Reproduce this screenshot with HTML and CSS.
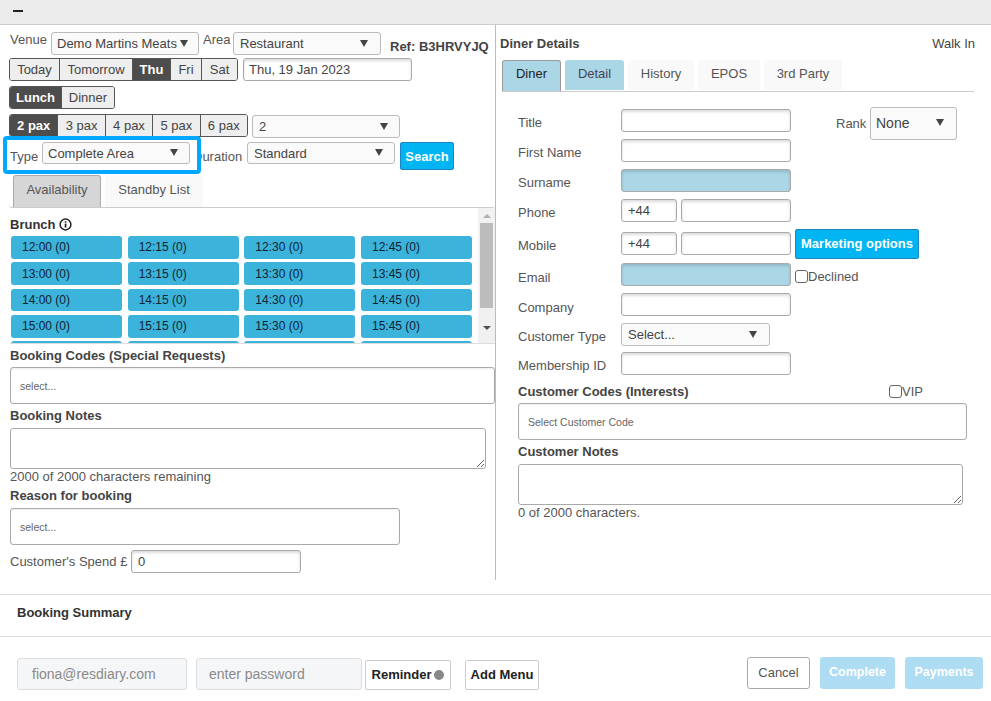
FILE: index.html
```html
<!DOCTYPE html>
<html lang="en">
<head>
<meta charset="utf-8">
<title>Booking</title>
<link rel="stylesheet" href="styles.css">
</head>
<body>
<header class="topbar"><span class="minus"></span></header>
<main class="columns">
  <section class="left">
    <div class="row r-venue">
      <span class="lbl venue-lbl">Venue</span>
      <div class="select s-venue"><span>Demo Martins Meats</span><i class="caret"></i></div>
      <span class="lbl area-lbl">Area</span>
      <div class="select s-area"><span>Restaurant</span><i class="caret"></i></div>
      <span class="ref">Ref: B3HRVYJQ</span>
    </div>
    <div class="row r-date">
      <div class="group">
        <button class="gbtn w-today">Today</button><button class="gbtn w-tom">Tomorrow</button><button class="gbtn on w-thu">Thu</button><button class="gbtn w-fri">Fri</button><button class="gbtn w-sat">Sat</button>
      </div>
      <input class="field date" value="Thu, 19 Jan 2023">
    </div>
    <div class="row r-meal">
      <div class="group">
        <button class="gbtn on w-lunch">Lunch</button><button class="gbtn w-dinner">Dinner</button>
      </div>
    </div>
    <div class="row r-pax">
      <div class="group">
        <button class="gbtn on w-pax">2 pax</button><button class="gbtn w-pax">3 pax</button><button class="gbtn w-pax">4 pax</button><button class="gbtn w-pax">5 pax</button><button class="gbtn w-pax">6 pax</button>
      </div>
      <div class="select s-pax"><span>2</span><i class="caret"></i></div>
    </div>
    <div class="row r-type">
      <span class="lbl type-lbl">Type</span>
      <div class="select s-type"><span>Complete Area</span><i class="caret"></i></div>
      <span class="lbl dur-lbl">Duration</span>
      <div class="select s-dur"><span>Standard</span><i class="caret"></i></div>
      <button class="search">Search</button>
      <div class="highlight"></div>
    </div>
    <div class="tabs left-tabs">
      <span class="tab tab-active w-avail">Availability</span>
      <span class="tab w-standby">Standby List</span>
    </div>
    <div class="avail">
      <div class="slots-wrap">
        <h3 class="brunch">Brunch
          <svg class="info" width="13" height="13" viewBox="0 0 13 13"><circle cx="6.5" cy="6.5" r="5.4" fill="none" stroke="#222" stroke-width="1.5"/><rect x="5.7" y="5.6" width="1.7" height="4" fill="#222"/><rect x="5.7" y="3.2" width="1.7" height="1.5" fill="#222"/></svg>
        </h3>
        <div class="slots">
          <span class="slot">12:00 (0)</span><span class="slot">12:15 (0)</span><span class="slot">12:30 (0)</span><span class="slot">12:45 (0)</span>
          <span class="slot">13:00 (0)</span><span class="slot">13:15 (0)</span><span class="slot">13:30 (0)</span><span class="slot">13:45 (0)</span>
          <span class="slot">14:00 (0)</span><span class="slot">14:15 (0)</span><span class="slot">14:30 (0)</span><span class="slot">14:45 (0)</span>
          <span class="slot">15:00 (0)</span><span class="slot">15:15 (0)</span><span class="slot">15:30 (0)</span><span class="slot">15:45 (0)</span>
          <span class="slot"></span><span class="slot"></span><span class="slot"></span><span class="slot"></span>
        </div>
      </div>
      <div class="scrollbar">
        <i class="arrow-up"></i>
        <div class="thumb"></div>
        <i class="arrow-down"></i>
      </div>
    </div>
    <div class="head h-codes">Booking Codes (Special Requests)</div>
    <div class="picker p-codes">select...</div>
    <div class="head h-notes">Booking Notes</div>
    <textarea class="notes n-left"></textarea>
    <div class="hint h-remain">2000 of 2000 characters remaining</div>
    <div class="head h-reason">Reason for booking</div>
    <div class="picker p-reason">select...</div>
    <div class="row r-spend">
      <span class="lbl spend-lbl">Customer's Spend £</span>
      <input class="field spend" value="0">
    </div>
  </section>

  <section class="right">
    <div class="diner-head"><strong>Diner Details</strong><span>Walk In</span></div>
    <div class="tabs right-tabs">
      <span class="tab tab-active tab-blue w-diner">Diner</span>
      <span class="tab tab-blue w-detail">Detail</span>
      <span class="tab w-history">History</span>
      <span class="tab w-epos">EPOS</span>
      <span class="tab w-party">3rd Party</span>
    </div>
    <div class="form">
      <div class="frow f-title">
        <label class="flabel">Title</label><input class="field wide">
        <span class="lbl rank-lbl">Rank</span>
        <div class="select s-rank"><span>None</span><i class="caret"></i></div>
      </div>
      <div class="frow f-std"><label class="flabel">First Name</label><input class="field wide"></div>
      <div class="frow f-std"><label class="flabel">Surname</label><input class="field wide req"></div>
      <div class="frow f-std"><label class="flabel">Phone</label><input class="field code" value="+44"><input class="field num"></div>
      <div class="frow f-mobile"><label class="flabel">Mobile</label><input class="field code" value="+44"><input class="field num"><button class="search market">Marketing options</button></div>
      <div class="frow f-email"><label class="flabel low">Email</label><input class="field wide req"><label class="check c-declined"><i class="box"></i>Declined</label></div>
      <div class="frow f-std"><label class="flabel low">Company</label><input class="field wide"></div>
      <div class="frow f-std"><label class="flabel">Customer Type</label><div class="select s-ctype"><span>Select...</span><i class="caret"></i></div></div>
      <div class="frow f-member"><label class="flabel">Membership ID</label><input class="field wide"></div>
    </div>
    <div class="codes-head"><span class="head">Customer Codes (Interests)</span><label class="check c-vip"><i class="box"></i>VIP</label></div>
    <div class="picker p-cust">Select Customer Code</div>
    <div class="head h-cnotes">Customer Notes</div>
    <textarea class="notes n-right"></textarea>
    <div class="hint h-count">0 of 2000 characters.</div>
  </section>
</main>
<section class="summary">Booking Summary</section>
<footer class="footer">
  <input class="login l-email" placeholder="fiona@resdiary.com">
  <input class="login l-pass" placeholder="enter password">
  <button class="plain b-remind">Reminder<i class="dot"></i></button>
  <button class="plain b-menu">Add Menu</button>
  <button class="cancel">Cancel</button>
  <button class="pale b-complete">Complete</button>
  <button class="pale b-pay">Payments</button>
</footer>
</body>
</html>
```
FILE: styles.css
```css
* { box-sizing: border-box; }
html, body { margin: 0; padding: 0; }
body {
  width: 991px;
  height: 701px;
  overflow: hidden;
  background: #fff;
  color: #555;
  font-family: "Liberation Sans", Arial, sans-serif;
  font-size: 13px;
}
button, input, textarea { font-family: inherit; margin: 0; }

.topbar {
  height: 25px;
  background: #ebebeb;
  border-bottom: 1px solid #ccc;
  padding: 10px 0 0 13px;
}
.minus { display: block; width: 10px; height: 2px; background: #222; }

.columns { display: flex; height: 556px; }
.left { width: 496px; border-right: 1px solid #bbb; padding-left: 9px; height: 555px; }
.right { flex: 1; padding-left: 4px; }

.row { display: flex; position: relative; }
.lbl { color: #555; white-space: nowrap; font-size: 13px; }

.select {
  display: flex;
  align-items: center;
  justify-content: space-between;
  height: 23px;
  border: 1px solid #bbb;
  border-radius: 3px;
  background: #fafafa;
  color: #444;
  padding: 0 11px 0 5px;
  font-size: 13px;
  white-space: nowrap;
}
.caret {
  width: 0; height: 0;
  border-left: 4px solid transparent;
  border-right: 4px solid transparent;
  border-top: 7px solid #444;
  margin-top: -1px;
}

.field {
  height: 23px;
  border: 1px solid #aaa;
  border-radius: 3px;
  background: #fff;
  box-shadow: inset 0 2px 3px rgba(0,0,0,.14);
  color: #444;
  font-size: 13px;
  padding: 0 6px;
  outline: none;
}

.r-venue { height: 23px; margin-top: 7px; padding-left: 1px; }
.venue-lbl { width: 41px; }
.s-venue { width: 148px; padding-right: 10px; }
.area-lbl { margin-left: 4px; width: 30px; }
.s-area { width: 148px; padding-left: 6px; padding-right: 12px; }
.ref { margin-left: 9px; margin-top: 7px; font-weight: bold; color: #444; font-size: 13px; }

.r-date { margin-top: 3px; }
.group { display: flex; height: 23px; border: 1px solid #555; border-radius: 3px; overflow: hidden; }
.gbtn {
  height: 100%;
  border: 0;
  border-left: 1px solid #555;
  background: #eee;
  color: #444;
  font-size: 13px;
  padding: 0;
}
.gbtn:first-child { border-left: 0; }
.gbtn.on { background: #4d4d4d; color: #fff; font-weight: bold; }
.w-today { width: 49px; }
.w-tom { width: 73px; }
.w-thu { width: 38px; }
.w-fri { width: 31px; }
.w-sat { width: 36px; }
.date { width: 169px; margin-left: 5px; padding-left: 5px; }

.r-meal { margin-top: 5px; }
.w-lunch { width: 51px; }
.w-dinner { width: 53px; }

.r-pax { margin-top: 5px; }
.w-pax { width: 47.4px; }
.s-pax { width: 148px; margin-left: 4px; margin-top: 1px; padding-left: 6px; }

.r-type { margin-top: 4px; height: 28px; padding-left: 1px; }
.type-lbl { position: relative; z-index: 2; margin-top: 7px; width: 32px; }
.s-type { position: relative; z-index: 2; width: 148px; height: 22px; padding-left: 5px; }
.dur-lbl { margin-left: 2px; margin-top: 7px; width: 55px; padding-left: 1px; }
.s-dur { width: 148px; height: 22px; padding-left: 6px; }
.search {
  margin-left: 5px;
  width: 54px;
  height: 28px;
  border: 1px solid #1a86c7;
  border-radius: 2px;
  background: #00b5f1;
  color: #fff;
  font-weight: bold;
  font-size: 13px;
  padding: 0;
}
.highlight {
  position: absolute;
  z-index: 1;
  left: -6px;
  top: -6px;
  width: 198px;
  height: 38px;
  border: 4px solid #00a8ff;
  border-radius: 4px;
  background: #fff;
}

.tabs { display: flex; gap: 4px; }
.tab {
  display: flex;
  align-items: center;
  justify-content: center;
  background: #f9f9f9;
  border-radius: 3px 3px 0 0;
  color: #555;
  font-size: 13px;
  padding-bottom: 4px;
}
.tab-active { background: #d6d6d6; border: 1px solid #aaa; border-bottom: 0; }
.left-tabs {
  margin-top: 5px;
  height: 33px;
  padding-left: 4px;
  border-bottom: 1px solid #ccc;
  border-radius: 0 0 3px 3px;
}
.w-avail { width: 88px; }
.w-standby { width: 98px; }

.avail { display: flex; height: 136px; margin-left: 1px; border-bottom: 1px solid #ddd; }
.slots-wrap { width: 468px; overflow: hidden; }
.brunch {
  display: flex;
  align-items: center;
  gap: 3px;
  margin: 9px 0 4px;
  height: 15px;
  font-size: 13px;
  font-weight: bold;
  color: #333;
}
.slots {
  display: grid;
  grid-template-columns: repeat(4, 111px);
  column-gap: 5.67px;
  grid-auto-rows: 22.9px;
  row-gap: 3.4px;
  margin-left: 1px;
  margin-top: 4px;
}
.slot {
  display: flex;
  align-items: center;
  padding-left: 11px;
  background: #3bb3da;
  border-radius: 3px;
  color: #123;
  font-size: 12px;
}
.scrollbar {
  width: 17px;
  margin-left: 1px;
  background: #f1f1f1;
  display: flex;
  flex-direction: column;
  align-items: center;
}
.thumb { width: 13px; height: 85px; background: #bcbcbc; margin-top: 5px; }
.arrow-up, .arrow-down { width: 0; height: 0; border-left: 4px solid transparent; border-right: 4px solid transparent; }
.arrow-up { border-bottom: 4px solid #b0b0b0; margin-top: 6px; }
.arrow-down { border-top: 4px solid #505050; margin-top: 18px; }

.head { font-weight: bold; color: #444; font-size: 13px; line-height: 15px; }
.picker {
  display: flex;
  align-items: center;
  border: 1px solid #aaa;
  border-radius: 3px;
  background: #fff;
  box-shadow: inset 0 1px 2px rgba(0,0,0,.08);
  color: #666;
  font-size: 10.5px;
  padding-left: 9px;
}
.h-codes { margin: 4px 0 0 1px; }
.p-codes { width: 485px; height: 37px; margin: 4px 0 0 1px; }
.h-notes { margin: 4px 0 0 1px; }
.notes {
  display: block;
  border: 1px solid #aaa;
  border-radius: 3px;
  background: #fff;
  outline: none;
}
.n-left { width: 476px; height: 41px; margin: 5px 0 0 1px; }
.hint { color: #555; font-size: 13px; line-height: 15px; }
.h-remain { margin: 0 0 0 1px; }
.h-reason { margin: 4px 0 0 1px; }
.p-reason { width: 390px; height: 37px; margin: 5px 0 0 1px; }
.r-spend { margin-top: 5px; padding-left: 1px; align-items: center; }
.spend-lbl { width: 121px; }
.spend { width: 170px; }

.diner-head {
  display: flex;
  justify-content: space-between;
  width: 475px;
  margin-top: 11px;
  line-height: 15px;
  font-size: 13px;
  color: #444;
}
.right-tabs {
  margin-top: 9px;
  height: 32px;
  width: 472px;
  margin-left: 2px;
  border-bottom: 1px solid #ccc;
}
.tab-blue { background: #abd6e6; color: #445; }
.tab-active.tab-blue { background: #abd6e6; color: #222; border-color: #999; }
.w-diner, .w-detail { width: 59px; }
.w-history { width: 66px; }
.w-epos { width: 62px; }
.w-party { width: 78px; }
.right-tabs .tab { padding-bottom: 6px; }
.right-tabs .tab:not(.tab-active) { height: 30px; padding-bottom: 4px; }

.form { padding-left: 18px; margin-top: 17px; }
.frow { display: flex; align-items: center; height: 23px; }
.f-std { margin-top: 7px; }
.f-mobile { margin-top: 10px; }
.f-email { margin-top: 8px; }
.f-member { margin-top: 6px; }
.flabel { width: 103px; color: #555; font-size: 13px; margin-top: 4px; }
.flabel.low { margin-top: 6px; }
.wide { width: 170px; }
.req { background: #abd6e6; }
.code { width: 56px; padding-left: 6px; }
.num { width: 110px; margin-left: 4px; }
.market { width: 124px; height: 30px; margin-left: 4px; }
.rank-lbl { margin-left: 45px; width: 34px; margin-top: 5px; }
.s-rank { width: 87px; height: 33px; margin-top: 5px; padding-left: 5px; padding-right: 12px; font-size: 14px; }
.s-ctype { width: 149px; padding-left: 6px; padding-right: 12px; }
.check { display: flex; align-items: center; font-size: 13px; color: #555; }
.box { width: 13px; height: 13px; border: 1px solid #666; border-radius: 3px; background: #fff; }
.c-declined { margin-left: 4px; margin-top: 3px; }
.c-declined .box { margin-top: 1px; }

.codes-head { display: flex; align-items: center; height: 15px; margin: 9px 0 0 18px; position: relative; }
.codes-head .head { width: 371px; }
.picker.p-cust { width: 449px; height: 37px; margin: 4px 0 0 18px; }
.h-cnotes { margin: 4px 0 0 18px; }
.n-right { width: 445px; height: 41px; margin: 5px 0 0 18px; }
.h-count { margin: 0 0 0 18px; }

.summary {
  height: 43px;
  margin-top: 13px;
  border-top: 1px solid #ddd;
  border-bottom: 1px solid #ddd;
  padding: 10px 0 0 17px;
  font-weight: bold;
  color: #333;
  font-size: 13px;
}

.footer { display: flex; align-items: flex-start; padding: 21px 0 0 17px; }
.login {
  height: 32px;
  border: 1px solid #ddd;
  border-radius: 3px;
  background: #f5f6f8;
  font-size: 14px;
  color: #888;
  outline: none;
}
.login::placeholder { color: #8a8a8a; opacity: 1; }
.l-email { width: 170px; padding-left: 14px; }
.l-pass { width: 166px; margin-left: 9px; padding-left: 12px; }
.plain {
  height: 30px;
  margin-top: 2px;
  border: 1px solid #ccc;
  border-radius: 2px;
  background: #fff;
  color: #222;
  font-weight: bold;
  font-size: 13px;
  padding: 0 0 2px;
  display: flex;
  align-items: center;
  justify-content: center;
}
.b-remind { width: 86px; margin-left: 3px; }
.dot { width: 10px; height: 10px; border-radius: 50%; background: #888; margin-left: 3px; margin-top: 2px; }
.b-menu { width: 74px; margin-left: 14px; }
.cancel {
  width: 63px;
  height: 32px;
  margin-left: 208px;
  margin-top: -1px;
  border: 1px solid #aaa;
  border-radius: 3px;
  background: #fff;
  color: #555;
  font-size: 13px;
  padding: 0 0 2px;
}
.pale {
  height: 32px;
  margin-top: -1px;
  border: 0;
  border-radius: 3px;
  background: #aedcf2;
  color: #fff;
  font-weight: bold;
  font-size: 12.5px;
  padding: 0 0 2px;
}
.b-complete { width: 75px; margin-left: 10px; }
.b-pay { width: 78px; margin-left: 10px; }
```
